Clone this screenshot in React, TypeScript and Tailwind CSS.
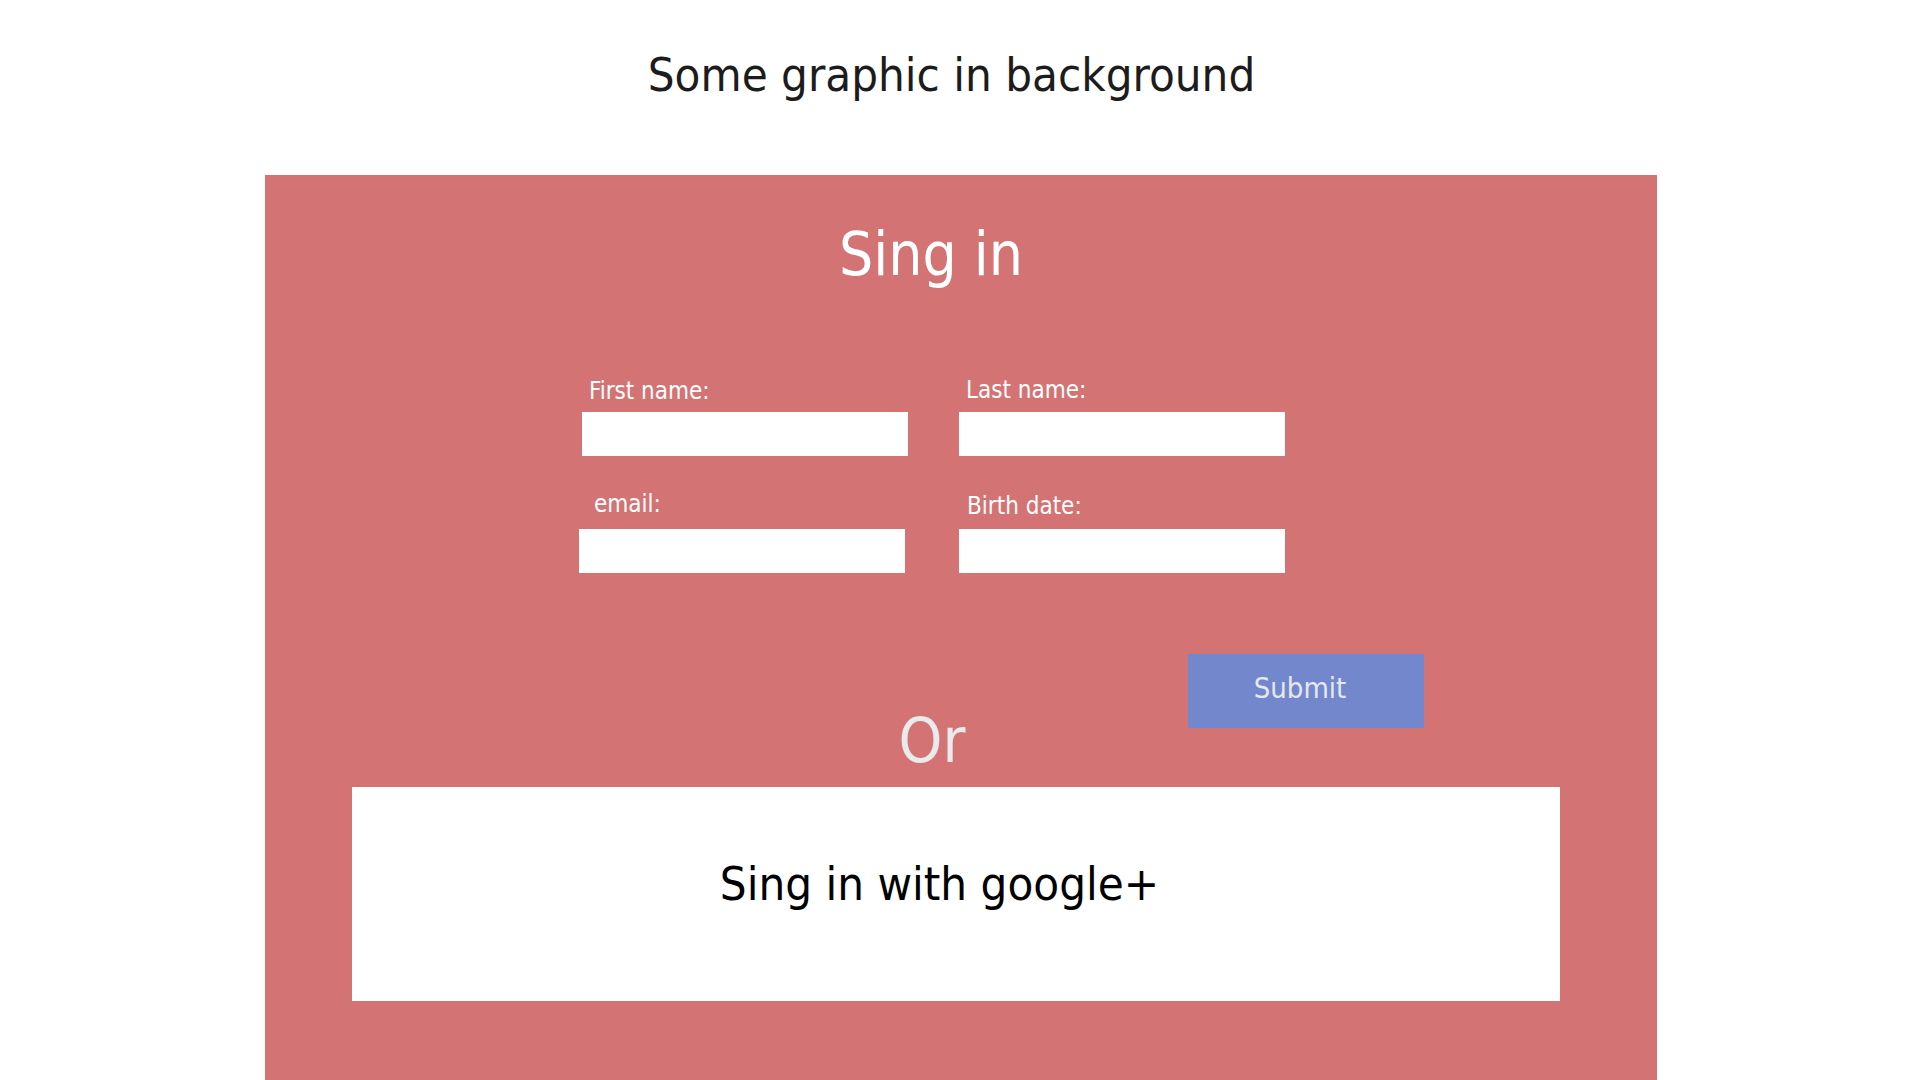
export default function App() {
  return (
    <div className="w-[1920px] h-[1080px] overflow-hidden bg-white font-['DejaVu_Sans_Condensed','DejaVu_Sans',sans-serif]">
      {/* Background caption */}
      <div className="h-[175px] pt-[51px] pr-[17px] text-center">
        <h1 className="text-[47px] leading-none text-[#1c1c1c]">Some graphic in background</h1>
      </div>

      {/* Sign in panel */}
      <section className="ml-[265px] w-[1392px] h-[905px] bg-[#d47373] flex flex-col">
        <h2 className="mt-[49px] pr-[60px] text-center text-[60px] leading-none text-white">Sing in</h2>

        <form className="mt-[94px] ml-[317px] grid grid-cols-[326px_326px] gap-x-[51px]">
          <div className="flex flex-col pt-[1px]">
            <label className="ml-[7px] text-[24px] leading-none text-white">First name:</label>
            <input type="text" className="mt-[9px] h-[44px] w-[326px] bg-white outline-none" />
          </div>
          <div className="flex flex-col">
            <label className="ml-[7px] text-[24px] leading-none text-white">Last name:</label>
            <input type="text" className="mt-[10px] h-[44px] w-[326px] bg-white outline-none" />
          </div>

          <div className="flex flex-col pt-[36px]">
            <label className="ml-[12px] text-[24px] leading-none text-white">email:</label>
            <input type="email" className="-ml-[3px] mt-[13px] h-[44px] w-[326px] bg-white outline-none" />
          </div>
          <div className="flex flex-col pt-[38px]">
            <label className="ml-[8px] text-[24px] leading-none text-white">Birth date:</label>
            <input type="text" className="mt-[11px] h-[44px] w-[326px] bg-white outline-none" />
          </div>
        </form>

        <div className="mt-[81px] pl-[923px] flex">
          <button
            type="button"
            className="w-[236px] h-[74px] bg-[#7287cc] flex items-center justify-center pr-[12px] pb-[5px] text-[29px] leading-none text-[#e6e8ee]"
          >
            Submit
          </button>
        </div>

        <p className="-mt-[18px] pr-[58px] text-center text-[62px] leading-none text-[#e8eaec]">Or</p>

        <button
          type="button"
          className="mt-[15px] ml-[87px] w-[1208px] h-[214px] bg-white flex justify-center pt-[73px] pr-[33px] text-[47px] leading-none text-black"
        >
          Sing in with google+
        </button>
      </section>
    </div>
  );
}
